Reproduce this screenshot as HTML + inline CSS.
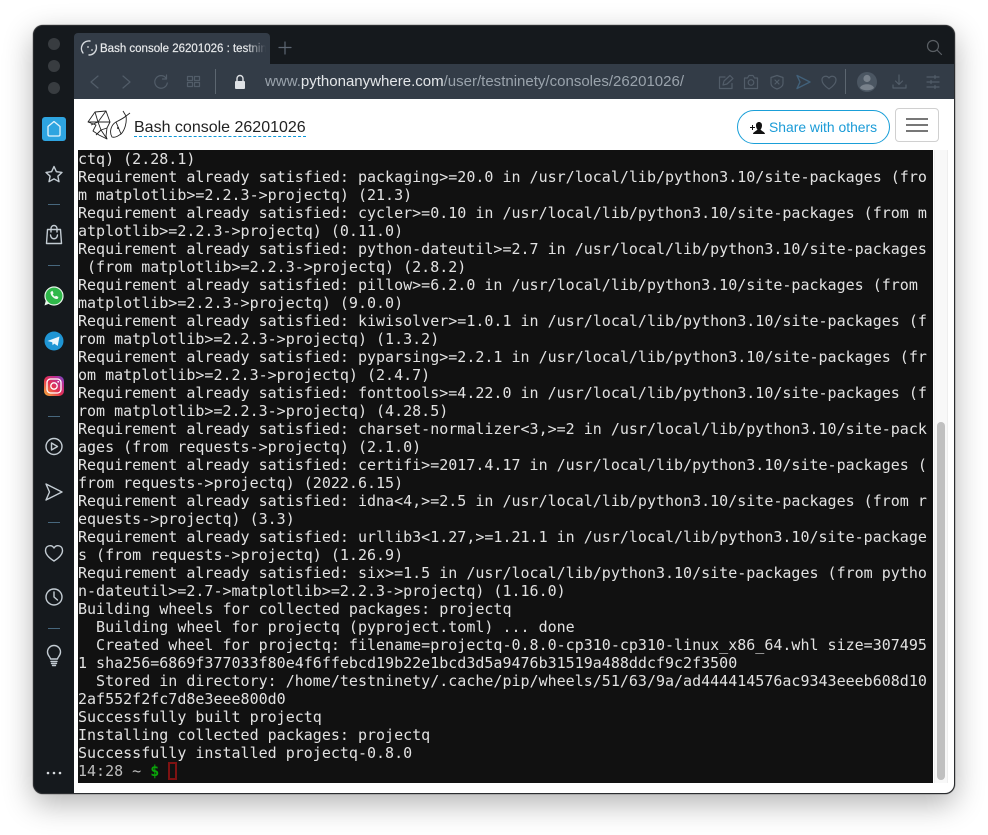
<!DOCTYPE html>
<html><head><meta charset="utf-8"><style>
html,body{margin:0;padding:0;width:988px;height:835px;overflow:hidden;background:#fff}
*{box-sizing:border-box}
.a{position:absolute}
#win{position:absolute;left:33px;top:25px;width:922px;height:769px;border-radius:10px;background:#15191d;box-shadow:0 10px 30px rgba(0,0,0,.3),0 0 1px #000;overflow:hidden;border:1px solid #2a2c2f}
#term{position:absolute;left:78px;top:150px;width:855px;height:633px;background:#111;overflow:hidden}
#term pre{position:absolute;left:0;top:0;margin:0;font:15px/18px "DejaVu Sans Mono",monospace;color:#e2e2e2;white-space:pre}
svg{position:absolute;overflow:visible}
.sep{position:absolute;left:48px;width:12px;height:1px;background:#47677d}
.ti{fill:none;stroke:#8a939c;stroke-width:1.2;stroke-linecap:round;stroke-linejoin:round}
.ta{fill:none;stroke:#525d69;stroke-width:1.2;stroke-linecap:round;stroke-linejoin:round}
.si{fill:none;stroke:#c3ccd3;stroke-width:1.4;stroke-linecap:round;stroke-linejoin:round}
</style></head><body>
<div id="win"></div>
<!-- tab -->
<div class="a" style="left:74px;top:33px;width:196px;height:32px;background:#333c47;border-radius:4px 4px 0 0"></div>
<div class="a" style="left:74px;top:64px;width:880px;height:35px;background:#333c47"></div>
<svg style="left:0;top:0" width="988" height="100">
<path d="M83 53 A7.500 7.500 0 0 1 90 41 M96 45 A7.500 7.500 0 0 1 89 55" fill="none" stroke="#d6dade" stroke-width="1.4" stroke-linecap="round"/>
<circle cx="88" cy="47" r=".9" fill="#d6dade"/><circle cx="92" cy="50" r=".9" fill="#d6dade"/>
<path class="ti" style="stroke:#5c6672" d="M285 42v12M279 47.500h12"/>
<circle class="ta" cx="933" cy="46" r="5.500" style="stroke:#5a5f64"/><path class="ta" style="stroke:#5a5f64" d="M937 50l4.500 4.500"/>
<path class="ta" d="M98 76l-7 6 7 6M123 76l7 6-7 6"/>
<path class="ta" d="M166 78a6.300 6.300 0 1 0 1.300 5M166.500 75v4h-4"/>
<path class="ta" d="M187.500 76.500h5v4h-5zM194.500 76.500h5v4h-5zM187.500 82.500h5v4h-5zM194.500 82.500h5v4h-5z"/>
<path d="M215.500 69v25M845.500 69v25" stroke="#5c6670" stroke-width="1"/>
<rect x="235" y="81" width="10" height="8" rx="1" fill="#dfe2e5"/><path d="M237 81v-2.500a3 3 0 0 1 6 0V81" fill="none" stroke="#dfe2e5" stroke-width="1.400"/>
<path class="ta" d="M725 77h-5.500v11.500h12.500v-5M723 85l1-4 6-5.500 3 3-6 5.500z"/>
<path class="ta" d="M744.500 78h3l1.500-2.500h4l1.500 2.500h3v10.500h-13z"/><circle class="ta" cx="751" cy="82.500" r="2.800"/>
<path class="ta" d="M777 75.500l6 2v6c0 2.500-3 4.500-6 5.500-3-1-6-3-6-5.500v-6zM775 80l4 4M779 80l-4 4"/>
<path fill="none" stroke="#42617a" stroke-width="1.400" stroke-linejoin="round" d="M797 75.500l13 6.500-13 6.500 3-6.500z"/>
<path class="ta" d="M829 89c-3-2-7-5-7-9 0-4 5-5 7-2 2-3 7-2 7 2 0 4-4 7-7 9z"/>
<circle cx="867" cy="82" r="10" fill="#4b5662"/><circle cx="867" cy="78.500" r="3.600" fill="#78818b"/><path d="M860 88c1-5 13-5 14 0-3 3-11 3-14 0z" fill="#78818b"/>
<path class="ta" d="M899 75v9M895.500 81l3.500 3.500 3.500-3.500M893 85v3h13v-3"/>
<path class="ta" d="M927 77h12M927 82h12M927 87h12"/>
<path class="ta" d="M935 75.500v3M931 80.500v3M935 85.500v3"/>
</svg>
<div class="a" style="left:100px;top:41px;width:166px;height:16px;overflow:hidden;font:11.500px/16px 'Liberation Sans',sans-serif;color:#e6e8ea;-webkit-text-stroke:.2px #e6e8ea;white-space:nowrap;-webkit-mask-image:linear-gradient(90deg,#000 88%,transparent 100%)">Bash console 26201026 : testninety</div>
<div class="a" style="left:265px;top:73px;font:15.030px/18px 'Liberation Sans',sans-serif;color:#9aa3ac;white-space:nowrap">www.<span style="color:#e3e6e9">pythonanywhere.com</span>/user/testninety/consoles/26201026/</div>
<!-- content -->
<div class="a" style="left:74px;top:99px;width:880px;height:694px;background:#fff;border-radius:0 0 9px 0"></div>
<!-- lights -->
<svg style="left:0;top:0" width="74" height="800">
<circle cx="54" cy="44" r="6" fill="#383c40"/><circle cx="54" cy="66" r="6" fill="#383c40"/><circle cx="54" cy="88" r="6" fill="#383c40"/>
<rect x="42" y="117" width="24" height="24" rx="3" fill="#2ea4e0"/>
<path d="M48 126.500l6-5 6 5v8c0 .8-.5 1.500-1.500 1.500h-9c-1 0-1.500-.7-1.500-1.500z" fill="none" stroke="#e4f3fb" stroke-width="1.300" stroke-linejoin="round"/>
<path class="si" d="M54 166.500l2.400 5.200 5.600.7-4.100 3.800 1.100 5.500-5-2.800-5 2.800 1.100-5.500-4.100-3.800 5.600-.7z"/>
<path class="si" d="M47.500 229.500h13l1 14h-15zM51 232v-3.500a3 3 0 0 1 6 0V232M50.500 235c.5 5 6.500 5 7 0"/>
<circle cx="54" cy="296" r="9" fill="#2fb84a" stroke="#e7f5ea" stroke-width="1.200"/><path d="M44.500 305.500l1.500-5.500 3.500 3.500z" fill="#e7f5ea"/>
<path d="M50.500 292c-.5 3 3.500 7.500 7 7l1-2-2.500-1.300-1 .9c-1-.5-1.800-1.300-2.300-2.400l.9-1-1.200-2.500z" fill="#f2fbf4"/>
<circle cx="54" cy="341" r="9.500" fill="#1f95d4"/><path d="M47.500 341l12-4.500-1.800 9.500-3.400-2.400-1.700 1.700-.4-3z" fill="#eef7fc"/>
<defs><linearGradient id="ig" x1="0" y1="1" x2="1" y2="0"><stop offset="0" stop-color="#f9b73c"/><stop offset=".45" stop-color="#e3304f"/><stop offset=".8" stop-color="#b5309c"/><stop offset="1" stop-color="#5a52c8"/></linearGradient></defs>
<rect x="44" y="376" width="20" height="20" rx="5" fill="url(#ig)"/><rect x="47" y="379" width="14" height="14" rx="3.500" fill="none" stroke="#fff" stroke-width="1.300"/><circle cx="54" cy="386" r="3.200" fill="none" stroke="#fff" stroke-width="1.300"/><circle cx="58.200" cy="381.800" r=".9" fill="#fff"/>
<circle class="si" cx="54" cy="446.500" r="8"/><path class="si" d="M51.500 443l6 3.500-6 3.500z"/>
<path class="si" d="M46 484l16 8-16 8 3.500-8z"/>
<path class="si" d="M54 561c-4-2.500-8.500-6-8.500-10.500 0-5 6-6.500 8.500-2.500 2.500-4 8.500-2.500 8.500 2.500 0 4.500-4.500 8-8.500 10.500z"/>
<circle class="si" cx="54" cy="597" r="8"/><path class="si" d="M54 592v5l3.500 3"/>
<path class="si" d="M50.500 659c0-2-3-3-3-7a6.500 6.500 0 0 1 13 0c0 4-3 5-3 7zM51 661.500h6M51.500 663.500h5M52.500 665.500h3"/>
<circle cx="48" cy="773" r="1.300" fill="#d6dade"/><circle cx="54" cy="773" r="1.300" fill="#d6dade"/><circle cx="60" cy="773" r="1.300" fill="#d6dade"/>
</svg>
<div class="sep" style="top:204px"></div><div class="sep" style="top:265px"></div><div class="sep" style="top:416px"></div><div class="sep" style="top:522px"></div><div class="sep" style="top:628px"></div>
<!-- logo -->
<svg style="left:0;top:0" width="140" height="145">
<g fill="none" stroke="#222" stroke-width=".9" stroke-linejoin="round">
<path d="M88 122l7-10 11-1 4 11-3 6-1 8 1 3-8-4-6-4 3-6z"/>
<path d="M95 112l3 10-10 0M106 111l-8 11 12 0M98 122l-7 3M98 122l3 8 6-2M101 130l-5 5M101 130l6 9M107 128l-6 2"/>
<path d="M112 137c-3-5-1-12 4-15 4-2 8-4 10-6 1 6-1 14-5 18-3 2-6 4-9 3zM126 116l-3-5M126 116l4-3M116 122l5 12"/>
</g>
<circle cx="118" cy="128" r="1" fill="#222"/>
</svg>
<div class="a" style="left:134px;top:118px;height:19px;font:16px/19px 'Liberation Sans',sans-serif;color:#222;white-space:nowrap;border-bottom:1px dashed #0a96d8">Bash console 26201026</div>
<div class="a" style="left:737px;top:110px;width:153px;height:34px;border:1px solid #1a9fd8;border-radius:17px"></div>
<div class="a" style="left:769px;top:118px;font:13.900px/18px 'Liberation Sans',sans-serif;color:#1a9bd7;white-space:nowrap">Share with others</div>
<svg style="left:0;top:0" width="780" height="140"><path d="M750 127.500h5M752.500 125v5" stroke="#111" stroke-width="1"/><path d="M753 134c0-2 3.500-3 4.500-4.500-1-1-1.500-2.500-1.500-4 0-2.500 1.500-3.500 3-3.500s3 1 3 3.500c0 1.500-.5 3-1.500 4 1 1.500 4.500 2.500 4.500 4.500z" fill="#111"/></svg>
<div class="a" style="left:895px;top:108px;width:44px;height:34px;border:1px solid #d0d0d0;border-radius:4px"></div>
<div class="a" style="left:906px;top:118px;width:22px;height:2px;background:#777"></div>
<div class="a" style="left:906px;top:124px;width:22px;height:2px;background:#777"></div>
<div class="a" style="left:906px;top:130px;width:22px;height:2px;background:#777"></div>
<!-- scrollbar -->
<div class="a" style="left:934px;top:150px;width:14px;height:633px;background:#f8f8f8;border-left:1px solid #eee;border-right:1px solid #eee"></div>
<div class="a" style="left:937px;top:422px;width:8px;height:358px;background:#c0c0c0;border-radius:4px"></div>
<!-- terminal -->
<div id="term"><pre>ctq) (2.28.1)
Requirement already satisfied: packaging&gt;=20.0 in /usr/local/lib/python3.10/site-packages (fro
m matplotlib&gt;=2.2.3-&gt;projectq) (21.3)
Requirement already satisfied: cycler&gt;=0.10 in /usr/local/lib/python3.10/site-packages (from m
atplotlib&gt;=2.2.3-&gt;projectq) (0.11.0)
Requirement already satisfied: python-dateutil&gt;=2.7 in /usr/local/lib/python3.10/site-packages
 (from matplotlib&gt;=2.2.3-&gt;projectq) (2.8.2)
Requirement already satisfied: pillow&gt;=6.2.0 in /usr/local/lib/python3.10/site-packages (from 
matplotlib&gt;=2.2.3-&gt;projectq) (9.0.0)
Requirement already satisfied: kiwisolver&gt;=1.0.1 in /usr/local/lib/python3.10/site-packages (f
rom matplotlib&gt;=2.2.3-&gt;projectq) (1.3.2)
Requirement already satisfied: pyparsing&gt;=2.2.1 in /usr/local/lib/python3.10/site-packages (fr
om matplotlib&gt;=2.2.3-&gt;projectq) (2.4.7)
Requirement already satisfied: fonttools&gt;=4.22.0 in /usr/local/lib/python3.10/site-packages (f
rom matplotlib&gt;=2.2.3-&gt;projectq) (4.28.5)
Requirement already satisfied: charset-normalizer&lt;3,&gt;=2 in /usr/local/lib/python3.10/site-pack
ages (from requests-&gt;projectq) (2.1.0)
Requirement already satisfied: certifi&gt;=2017.4.17 in /usr/local/lib/python3.10/site-packages (
from requests-&gt;projectq) (2022.6.15)
Requirement already satisfied: idna&lt;4,&gt;=2.5 in /usr/local/lib/python3.10/site-packages (from r
equests-&gt;projectq) (3.3)
Requirement already satisfied: urllib3&lt;1.27,&gt;=1.21.1 in /usr/local/lib/python3.10/site-package
s (from requests-&gt;projectq) (1.26.9)
Requirement already satisfied: six&gt;=1.5 in /usr/local/lib/python3.10/site-packages (from pytho
n-dateutil&gt;=2.7-&gt;matplotlib&gt;=2.2.3-&gt;projectq) (1.16.0)
Building wheels for collected packages: projectq
  Building wheel for projectq (pyproject.toml) ... done
  Created wheel for projectq: filename=projectq-0.8.0-cp310-cp310-linux_x86_64.whl size=307495
1 sha256=6869f377033f80e4f6ffebcd19b22e1bcd3d5a9476b31519a488ddcf9c2f3500
  Stored in directory: /home/testninety/.cache/pip/wheels/51/63/9a/ad444414576ac9343eeeb608d10
2af552f2fc7d8e3eee800d0
Successfully built projectq
Installing collected packages: projectq
Successfully installed projectq-0.8.0
<span style="color:#bdbdbd">14:28 ~ </span><b style="color:#0aa50a">$</b> </pre>
<div class="a" style="left:90px;top:612px;width:9px;height:18px;border:2px solid #7e1212"></div></div>
</body></html>
